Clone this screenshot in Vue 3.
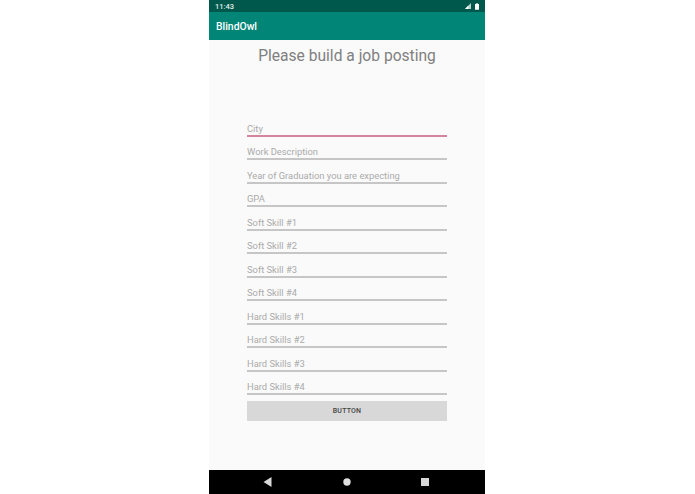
<script setup>
const fields = [
  'City',
  'Work Description',
  'Year of Graduation you are expecting',
  'GPA',
  'Soft Skill #1',
  'Soft Skill #2',
  'Soft Skill #3',
  'Soft Skill #4',
  'Hard Skills #1',
  'Hard Skills #2',
  'Hard Skills #3',
  'Hard Skills #4'
]
</script>

<template>
  <div class="page">
    <div class="phone">
      <div class="status-bar">
        <span class="clock">11:43</span>
        <div class="status-icons">
          <svg width="6" height="6" viewBox="0 0 7 7"><path d="M7 0V7H0Z" fill="#b5d3cd" /><path d="M4 3V7H0Z" fill="#fff" /></svg>
          <svg width="4" height="7" viewBox="0 0 5 8"><path d="M1.5 0H3.5V1H5V8H0V1H1.5Z" fill="#fff" /></svg>
        </div>
      </div>
      <div class="app-bar">BlindOwl</div>
      <main class="content">
        <h1 class="title">Please build a job posting</h1>
        <form class="form" @submit.prevent>
          <div
            v-for="(field, i) in fields"
            :key="field"
            class="field"
            :class="{ focused: i === 0 }"
          >{{ field }}</div>
          <button class="submit" type="button">BUTTON</button>
        </form>
      </main>
      <div class="nav-bar">
        <svg width="9" height="10" viewBox="0 0 9 10"><path d="M8.5 0V10L0.5 5Z" fill="#d8d8d8" /></svg>
        <svg width="8" height="8" viewBox="0 0 8 8"><circle cx="4" cy="4" r="3.7" fill="#e0e0e0" /></svg>
        <svg width="8" height="8" viewBox="0 0 8 8"><rect width="8" height="8" fill="#d8d8d8" /></svg>
      </div>
    </div>
  </div>
</template>

<style>
html, body {
  margin: 0;
  background: #fff;
}
</style>

<style scoped>
.page {
  width: 695px;
  height: 494px;
  display: flex;
  justify-content: center;
  font-family: Roboto, "Liberation Sans", sans-serif;
  overflow: hidden;
}
.phone {
  width: 276px;
  margin-left: -1px;
  height: 494px;
  display: flex;
  flex-direction: column;
  background: #fafafa;
}
.status-bar {
  height: 12px;
  background: #00574b;
  display: flex;
  align-items: center;
  justify-content: space-between;
  padding: 0 6px;
  color: #e3efec;
  font-size: 7.5px;
  font-weight: 500;
}
.status-icons {
  display: flex;
  align-items: center;
  gap: 4px;
}
.app-bar {
  height: 28px;
  background: #008577;
  color: #fff;
  font-size: 10.4px;
  font-weight: 500;
  line-height: 29px;
  padding-left: 7px;
}
.content {
  flex: 1;
  display: flex;
  flex-direction: column;
  align-items: center;
}
.title {
  margin: 6px 0 0;
  font-size: 15.6px;
  font-weight: 400;
  line-height: 21px;
  color: #808080;
}
.form {
  width: 200px;
  margin-top: 47.5px;
  display: flex;
  flex-direction: column;
}
.field {
  height: 22px;
  margin-bottom: 1.5px;
  padding-top: 7px;
  box-sizing: border-box;
  border-bottom: 2px solid #c6c6c6;
  color: #aaa;
  font-size: 9.35px;
  line-height: 13px;
}
.field.focused {
  border-bottom-color: #d4859b;
}
.submit {
  margin-top: 4px;
  height: 20px;
  border: 0;
  padding: 0;
  background: #d8d8d8;
  color: #444;
  font-family: inherit;
  font-size: 7px;
  font-weight: 500;
  letter-spacing: 0.2px;
}
.nav-bar {
  height: 24px;
  background: #000;
  display: flex;
  align-items: center;
  justify-content: space-between;
  padding: 0 56px 0 54px;
}
</style>
